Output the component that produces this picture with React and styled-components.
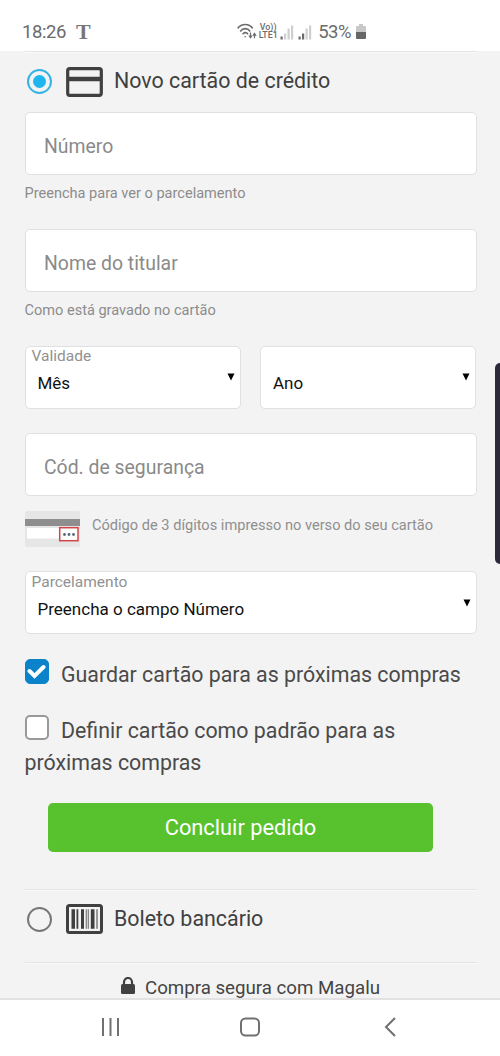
import React from "react";
import styled, { createGlobalStyle } from "styled-components";

const GlobalStyle = createGlobalStyle`
  * { box-sizing: border-box; }
  body { margin: 0; background: #f3f3f3; font-family: Roboto, "Liberation Sans", sans-serif; }
`;

const Screen = styled.div`
  position: relative;
  display: flex;
  flex-direction: column;
  width: 500px;
  height: 1056px;
  overflow: hidden;
  background: #f3f3f3;
`;

const StatusBar = styled.header`
  display: flex;
  align-items: center;
  flex: none;
  height: 51px;
  padding: 13px 133px 0 22px;
  background: #fff;
  color: #6b6b6b;
`;

const Clock = styled.span`
  font-size: 18.5px;
  line-height: 22px;
  letter-spacing: -0.4px;
`;

const AppMark = styled.span`
  margin-left: 10px;
  font: bold 22px/22px "Liberation Serif", serif;
  color: #777;
`;

const Indicators = styled.div`
  display: flex;
  align-items: center;
  margin-left: auto;
`;

const Volte = styled.span`
  display: flex;
  flex-direction: column;
  align-items: center;
  width: 20px;
  margin: -2px 2px 0 1px;
  font-size: 8.8px;
  line-height: 8px;
  font-weight: 500;
`;

const Percent = styled.span`
  margin: 0 4px 0 6px;
  font-size: 18.5px;
  line-height: 22px;
  letter-spacing: -0.5px;
`;

const Content = styled.main`
  display: flex;
  flex-direction: column;
  flex: none;
  height: 947px;
  padding: 0 23.5px 0 24.5px;
  overflow: hidden;
`;

const PaymentOption = styled.label`
  display: flex;
  flex: none;
  height: ${(p) => p.$height}px;
  padding: ${(p) => p.$top}px 0 0 2px;
  border-top: 1px solid #e4e4e4;
  box-shadow: inset 0 1px #fafafa;
`;

const Radio = styled.span`
  display: flex;
  align-items: center;
  justify-content: center;
  flex: none;
  width: 25px;
  height: 25px;
  margin-top: 2px;
  border: ${(p) => (p.$on ? "2px solid #35b4e3" : "2px solid #777")};
  border-radius: 50%;
  &::after {
    content: "";
    width: 13px;
    height: 13px;
    border-radius: 50%;
    background: ${(p) => (p.$on ? "#1fb5ee" : "transparent")};
  }
`;

const OptionIcon = styled.svg`
  flex: none;
  width: 37px;
  height: 30px;
  margin: -0.5px 0 0 14px;
`;

const OptionText = styled.span`
  margin: 1px 0 0 11.5px;
  font-size: 21.4px;
  line-height: 26px;
  color: #404040;
`;

const Field = styled.div`
  display: flex;
  flex-direction: column;
  flex: none;
  height: ${(p) => p.$height}px;
`;

const FieldRow = styled.div`
  display: grid;
  flex: none;
  grid-template-columns: 216px 216px;
  gap: 19.5px;
  height: 87px;
`;

const Box = styled.div`
  flex: none;
  width: 100%;
  height: 63px;
  border: 1px solid #e0e0e0;
  border-radius: 5px;
  background: #fff;
`;

const Input = styled(Box)`
  padding: 21px 18.5px 0;
  font-size: 19.4px;
  line-height: 26px;
  color: #8a8a8a;
`;

const Helper = styled.span`
  margin-top: 9px;
  font-size: 14.55px;
  line-height: 20px;
  color: #8c8c8c;
`;

const Select = styled(Box)`
  display: grid;
  grid-template-columns: 1fr 8px;
  grid-template-rows: 19px 36px;
  padding: ${(p) => p.$top}px 5px 0 6px;
`;

const FloatLabel = styled.span`
  grid-column: 1 / 3;
  font-size: 15.5px;
  line-height: 19px;
  color: #919191;
`;

const Value = styled.span`
  padding-left: 6px;
  font-size: 17px;
  line-height: 34px;
  color: #111;
`;

const Arrow = styled.svg`
  width: 8px;
  height: 8px;
  margin-top: 7px;
`;

const CvvHint = styled.div`
  display: flex;
  margin-top: 14.5px;
  font-size: 14.6px;
  line-height: 29px;
  color: #8f8f8f;
  svg { flex: none; margin: 0 11.5px 0 -1px; }
`;

const CheckLine = styled.label`
  flex: none;
  height: ${(p) => p.$height}px;
  padding-top: 1px;
  font-size: 21.35px;
  line-height: 32px;
  color: #4a4a4a;
`;

const Check = styled.span`
  display: inline-flex;
  align-items: center;
  justify-content: center;
  width: 24px;
  height: 25px;
  margin-right: 12.5px;
  vertical-align: top;
  border: ${(p) => (p.$on ? "1px solid #0b83ca" : "2px solid #999")};
  border-radius: 5px;
  background: ${(p) => (p.$on ? "#0b83ca" : "#fff")};
`;

const Submit = styled.button`
  flex: none;
  width: 385px;
  height: 49px;
  margin: 0 0 37px 23.5px;
  padding: 0;
  border: 0;
  border-radius: 5px;
  background: #57c22d;
  color: #fff;
  font-family: inherit;
  font-size: 21.8px;
`;

const Secure = styled.div`
  display: flex;
  align-items: flex-start;
  justify-content: center;
  flex: none;
  height: 40px;
  padding: 13px 1px 0 0;
  border-top: 1px solid #e4e4e4;
  box-shadow: inset 0 1px #fafafa;
  font-size: 18.7px;
  line-height: 24px;
  color: #444;
  svg { margin: 1px 9px 0 0; }
`;

const NavBar = styled.nav`
  display: flex;
  align-items: center;
  justify-content: space-between;
  flex: none;
  height: 58px;
  padding: 0 100px 2px;
  border-top: 2px solid #e2e2e2;
  background: #fff;
`;

const EdgeHandle = styled.div`
  position: absolute;
  right: -5px;
  top: 363px;
  width: 10px;
  height: 201px;
  border-radius: 6px;
  background: #2c293b;
`;

const Signal = ({ level }) => (
  <svg width="14" height="15" viewBox="0 0 14 15">
    {[[0, 3], [3.5, 6], [7, 11], [10.5, 14]].map(([x, h], i) => (
      <rect key={x} x={x + 0.5} y={14.5 - h} width="2.2" height={h} fill={i < level ? "#6b6b6b" : "#cfcfcf"} />
    ))}
  </svg>
);

const SelectBox = ({ label, value, top = 0 }) => (
  <Select $top={top}>
    <FloatLabel>{label}</FloatLabel>
    <Value>{value}</Value>
    <Arrow viewBox="0 0 8 8"><path d="M.5.5h7L4 7.5z" fill="#000" /></Arrow>
  </Select>
);

export default function App() {
  return (
    <Screen>
      <GlobalStyle />
      <StatusBar>
        <Clock>18:26</Clock>
        <AppMark>T</AppMark>
        <Indicators>
          <svg width="20" height="18" viewBox="0 0 20 16" preserveAspectRatio="none" fill="none" stroke="#6b6b6b" strokeWidth="1.5">
            <path d="M.7 4.8C4.5.2 12 .2 15.7 4.8M3.2 7.5c2.8-3.3 7.4-3.3 10 0M5.6 10c1.500-1.900 4-1.900 5.4 0" />
            <path d="M7 11.8h2.4L8.2 13.2z" fill="#6b6b6b" stroke="none" />
            <path d="M13.5 8.5v4M17.5 13.5v-4" strokeWidth="1.2" />
            <path d="M11.3 11h4.4l-2.2 3zM15.3 11.3h4.4l-2.2-3z" fill="#6b6b6b" stroke="none" />
          </svg>
          <Volte><span>Vo))</span><span>LTE1</span></Volte>
          <Signal level={1} />
          <svg width="4" height="1" />
          <Signal level={2} />
          <Percent>53%</Percent>
          <svg width="12" height="16" viewBox="0 0 12 16">
            <path d="M4 0h4v2h2q1 0 1 1v5H1V3q0-1 1-1h2z" fill="#c8c8c8" />
            <path d="M1 8h10v6q0 1-1 1H2q-1 0-1-1z" fill="#666" />
          </svg>
        </Indicators>
      </StatusBar>

      <Content>
        <PaymentOption $height={61} $top={15}>
          <Radio $on />
          <OptionIcon viewBox="0 0 37 30">
            <rect x="1.7" y="1.7" width="33.6" height="26.6" rx="2" fill="none" stroke="#404040" strokeWidth="3.2" />
            <path d="M2 12h33" stroke="#404040" strokeWidth="4.5" />
          </OptionIcon>
          <OptionText>Novo cartão de crédito</OptionText>
        </PaymentOption>

        <Field $height={117}>
          <Input>Número</Input>
          <Helper>Preencha para ver o parcelamento</Helper>
        </Field>
        <Field $height={117}>
          <Input>Nome do titular</Input>
          <Helper>Como está gravado no cartão</Helper>
        </Field>
        <FieldRow>
          <SelectBox label="Validade" value="Mês" />
          <SelectBox label="" value="Ano" />
        </FieldRow>
        <Field $height={138}>
          <Input>Cód. de segurança</Input>
          <CvvHint>
            <svg width="57" height="37" viewBox="0 0 57 37">
              <rect x="1" y="0" width="55" height="36" rx="2" fill="#e6e6e6" />
              <rect x="1" y="8" width="55" height="7" fill="#8e8e8e" />
              <rect x="3" y="17" width="34" height="10.5" fill="#fff" />
              <rect x="35.7" y="16.7" width="18.3" height="13" fill="#fff" stroke="#d64545" strokeWidth="1.5" />
              <g fill="#596779"><circle cx="40.5" cy="23.5" r="1.4" /><circle cx="45" cy="23.5" r="1.4" /><circle cx="49.5" cy="23.5" r="1.4" /></g>
            </svg>
            Código de 3 dígitos impresso no verso do seu cartão
          </CvvHint>
        </Field>
        <Field $height={87}>
          <SelectBox label="Parcelamento" value="Preencha o campo Número" top={1} />
        </Field>

        <CheckLine $height={56}>
          <Check $on>
            <svg width="19" height="15" viewBox="0 0 19 15"><path d="M2.500 7l5 5L16.500 3" fill="none" stroke="#fff" strokeWidth="4" strokeLinecap="round" /></svg>
          </Check>
          Guardar cartão para as próximas compras
        </CheckLine>
        <CheckLine $height={89}>
          <Check />
          Definir cartão como padrão para as próximas compras
        </CheckLine>
        <Submit>Concluir pedido</Submit>

        <PaymentOption $height={73} $top={14.5}>
          <Radio />
          <OptionIcon viewBox="0 0 37 30">
            <rect x="1.5" y="1.5" width="34" height="27" rx="2" fill="none" stroke="#404040" strokeWidth="3" />
            <path d="M5.5 5.2h3.5v19.6h-3.5zM10.5 5.2h1.8v19.6h-1.8zM15 5.2h3v19.6h-3zM19.8 5.2h.8v19.6h-.8zM21.8 5.2h.8v19.6h-.8zM24.8 5.2h3.7v19.6h-3.7zM30.5 5.2h1v19.6h-1z" fill="#404040" />
          </OptionIcon>
          <OptionText>Boleto bancário</OptionText>
        </PaymentOption>
        <Secure>
          <svg width="16" height="18" viewBox="0 0 16 18">
            <path d="M4 8V5a4 4 0 0 1 8 0v3" fill="none" stroke="#404040" strokeWidth="2.2" />
            <rect x="1" y="7" width="14" height="10" rx="1.5" fill="#404040" />
          </svg>
          Compra segura com Magalu
        </Secure>
      </Content>

      <NavBar>
        <svg width="20" height="20" viewBox="0 0 20 20"><path d="M3 1v18M10.5 1v18M18 1v18" stroke="#707070" strokeWidth="2" /></svg>
        <svg width="20" height="20" viewBox="0 0 20 20"><rect x="1" y="1.5" width="18" height="17" rx="4.5" fill="none" stroke="#707070" strokeWidth="2" /></svg>
        <svg width="20" height="20" viewBox="0 0 20 20"><path d="M15 1L6 10l9 9" fill="none" stroke="#707070" strokeWidth="2" /></svg>
      </NavBar>
      <EdgeHandle />
    </Screen>
  );
}
